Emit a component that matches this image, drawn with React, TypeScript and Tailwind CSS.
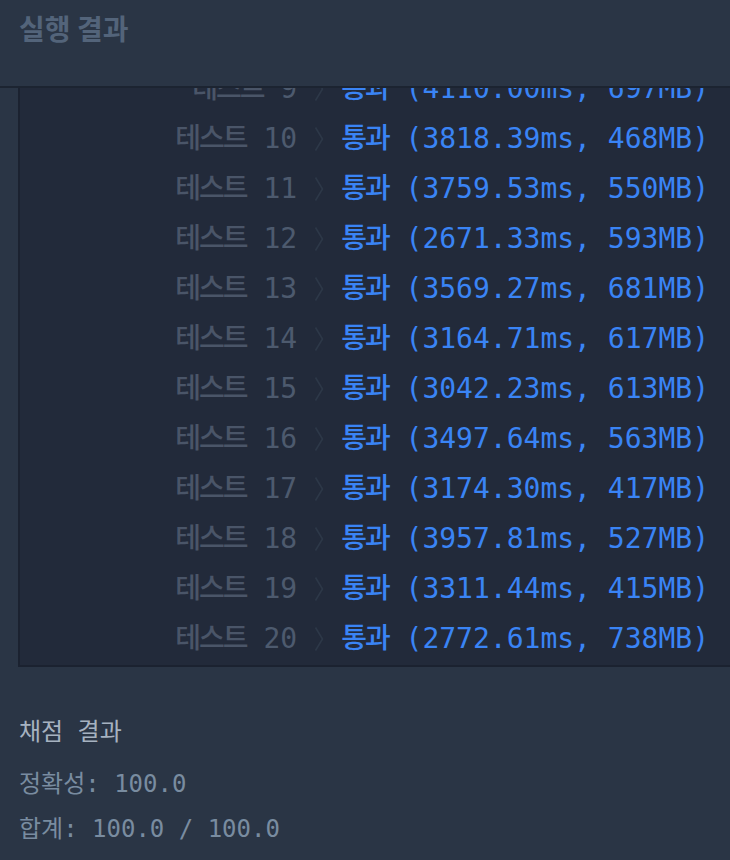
const rows = [
  { n: 9, ms: '4110.00', mb: 697 },
  { n: 10, ms: '3818.39', mb: 468 },
  { n: 11, ms: '3759.53', mb: 550 },
  { n: 12, ms: '2671.33', mb: 593 },
  { n: 13, ms: '3569.27', mb: 681 },
  { n: 14, ms: '3164.71', mb: 617 },
  { n: 15, ms: '3042.23', mb: 613 },
  { n: 16, ms: '3497.64', mb: 563 },
  { n: 17, ms: '3174.30', mb: 417 },
  { n: 18, ms: '3957.81', mb: 527 },
  { n: 19, ms: '3311.44', mb: 415 },
  { n: 20, ms: '2772.61', mb: 738 }
];

const mono = "font-['DejaVu_Sans_Mono','Noto_Sans_CJK_KR',monospace]";

function Chevron() {
  return (
    <svg viewBox="0 0 10 26" className="w-[10px] h-[26px] mx-[17px] shrink-0" fill="none">
      <path d="M1.5 1.5 L8.5 13 L1.5 24.5" stroke="#2d3848" strokeWidth="1.6" />
    </svg>
  );
}

function ResultRow({ n, ms, mb }: { n: number; ms: string; mb: number }) {
  return (
    <div className={`flex items-center justify-end h-[50px] pr-[21px] text-[28px] leading-none ${mono}`}>
      <span className="text-[#4d5a6e] whitespace-pre">
        <span className="tracking-[-2px] font-medium text-[#4a5568]">테스트</span> {n}
      </span>
      <Chevron />
      <span className="text-[#3a84f5] whitespace-pre">
        <span className="tracking-[-2px] font-medium">통과</span> ({ms}ms, {mb}MB)
      </span>
    </div>
  );
}

export default function App() {
  return (
    <div className="w-[730px] h-[860px] bg-[#2a3545] flex flex-col overflow-hidden">
      <div className="h-[88px] shrink-0 border-b-2 border-[#1c2431] px-[19px] pt-[10px]">
        <h2 className="text-[28px] font-bold text-[#53647a] font-['Noto_Sans_CJK_KR',sans-serif] leading-[36px]">
          실행 결과
        </h2>
      </div>

      <div className="ml-[18px] h-[579px] shrink-0 bg-[#222a3a] border-l-2 border-b-2 border-[#1b2230] overflow-hidden">
        <div className="-mt-[24px]">
          {rows.map((r) => (
            <ResultRow key={r.n} {...r} />
          ))}
        </div>
      </div>

      <div className={`px-[19px] pt-[48px] flex flex-col ${mono}`}>
        <h3 className="text-[24px] leading-[34px] text-[#a6b2c0] whitespace-pre">채점 결과</h3>
        <p className="mt-[18px] text-[24px] leading-[34px] text-[#798ca0] whitespace-pre">정확성: 100.0</p>
        <p className="mt-[11px] text-[24px] leading-[34px] text-[#798ca0] whitespace-pre">합계: 100.0 / 100.0</p>
      </div>
    </div>
  );
}
